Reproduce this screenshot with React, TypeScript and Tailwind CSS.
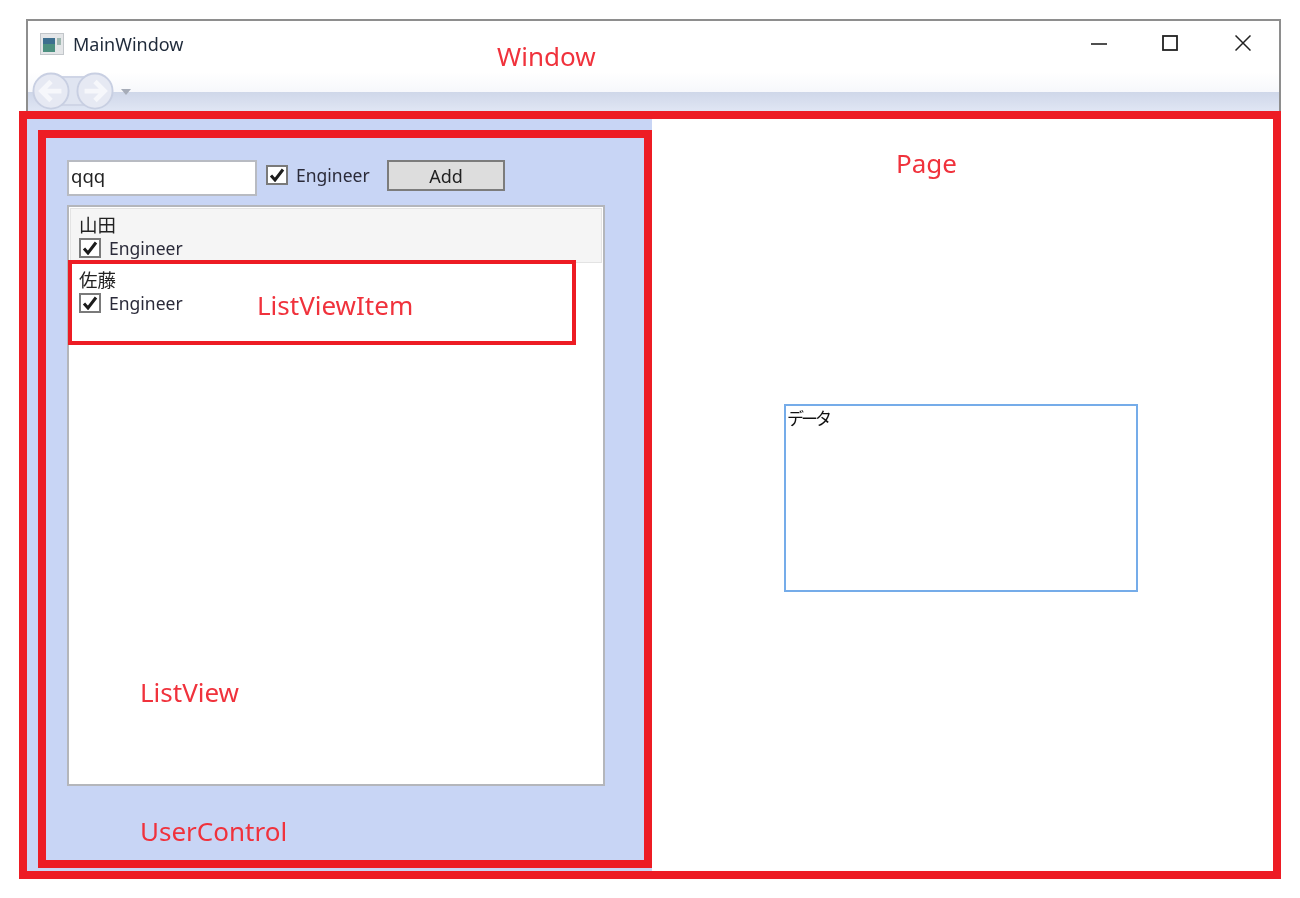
const font = "[font-family:'Noto_Sans','Noto_Sans_CJK_JP',sans-serif]";

function Check() {
  return (
    <span className="flex w-[22px] h-[20px] shrink-0 items-center justify-center border-2 border-[#7a7a7a] bg-white">
      <svg width="16" height="14" viewBox="0 0 16 14">
        <path d="M2 7.5 L6 12 L14 1.5" fill="none" stroke="#1c1c1c" strokeWidth="3" />
      </svg>
    </span>
  );
}

function Item({ name, first }: { name: string; first?: boolean }) {
  return (
    <div className={`h-[55px] pl-[8px] border ${first ? "bg-[#f5f5f5] border-[#e3e3e3]" : "bg-white border-transparent"}`}>
      <div className="h-[20px] mt-[6px] text-[18.5px] leading-[20px] text-[#222]">{name}</div>
      <div className="flex items-center gap-[8px] mt-[3px]">
        <Check />
        <span className="text-[17.5px] leading-[20px] text-[#2b2b3a]">Engineer</span>
      </div>
    </div>
  );
}

function Nav({ dir }: { dir: "l" | "r" }) {
  return (
    <svg width="38" height="38" viewBox="0 0 40 40" className="relative shrink-0">
      <circle cx="20" cy="20" r="18.5" fill="#e6e9f3" stroke="#c8cfe2" strokeWidth="2" />
      <path
        d={dir === "l" ? "M31 20 H12 M20 10 L10 20 L20 30" : "M9 20 H28 M20 10 L30 20 L20 30"}
        fill="none"
        stroke="#f6f7fb"
        strokeWidth="5"
      />
    </svg>
  );
}

export default function App() {
  return (
    <div className={`relative w-[1300px] h-[898px] overflow-hidden bg-white pt-[19px] blur-[0.4px] ${font}`}>
      {/* window chrome */}
      <div className="ml-[26px] w-[1255px] h-[92px] border-t-2 border-x-2 border-[#8e8e8e] flex flex-col">
        <div className="h-[30px] mt-[8px] flex items-center pl-[12px] shrink-0">
          <svg width="24" height="22" viewBox="0 0 24 22">
            <rect x="0.5" y="0.5" width="23" height="21" fill="#e4e6e8" stroke="#c2c6ca" />
            <rect x="3" y="5" width="12" height="14" fill="#4d9080" />
            <rect x="3" y="5" width="12" height="6" fill="#3d6f8f" />
            <rect x="17" y="5" width="4" height="7" fill="#9fb8b0" />
          </svg>
          <span className="ml-[9px] text-[18px] leading-[20px] text-[#1f2a3a]">MainWindow</span>
          <div className="ml-auto flex items-center mr-[28px] -mt-[2px]">
            <svg width="16" height="16" viewBox="0 0 16 16"><path d="M0 9 H16" stroke="#222" strokeWidth="1.6" /></svg>
            <svg className="ml-[55px]" width="16" height="16" viewBox="0 0 16 16"><rect x="1" y="1" width="14" height="14" fill="none" stroke="#222" strokeWidth="1.8" /></svg>
            <svg className="ml-[57px]" width="16" height="16" viewBox="0 0 16 16"><path d="M0.5 0.5 L15.5 15.5 M15.5 0.5 L0.5 15.5" stroke="#222" strokeWidth="1.5" /></svg>
          </div>
        </div>
        <div className="relative flex-1 bg-[linear-gradient(to_bottom,#ffffff_0%,#ffffff_25%,#eff1f8_100%)]">
          <div className="absolute inset-x-0 top-[33px] bottom-0 bg-[linear-gradient(to_bottom,#cfd7e9,#e0e6f4)]" />
          <div className="absolute left-[4px] top-[13px] flex items-center gap-[6px]">
            <div className="absolute left-[20px] top-[4px] w-[50px] h-[30px] bg-[#e0e5f1] border-y-2 border-[#cfd5e6]" />
            <Nav dir="l" />
            <Nav dir="r" />
            <svg width="12" height="8" viewBox="0 0 12 8" className="mt-[2px]"><path d="M1 1 H11 L6 7 Z" fill="#a6acb8" /></svg>
          </div>
        </div>
      </div>

      {/* page frame */}
      <div className="ml-[19px] w-[1262px] h-[768px] border-8 border-[#ed1c24] flex">
        <div className="w-[625px] bg-[#c8d5f5] pt-[11px] pl-[11px]">
          <div className="w-[614px] h-[738px] border-8 border-[#ed1c24] pl-[21px] pt-[22px]">
            <div className="flex items-start">
              <div className="w-[190px] h-[36px] bg-white border-2 border-[#b8bbc2] pl-[2px] text-[18.5px] leading-[28px] text-[#222]">qqq</div>
              <div className="flex items-center gap-[8px] ml-[9px] mt-[5px]">
                <Check />
                <span className="w-[73px] whitespace-nowrap text-[17.5px] leading-[20px] text-[#2b2b3a]">Engineer</span>
              </div>
              <div className="ml-[18px] w-[118px] h-[31px] bg-[#dddddd] border-2 border-[#7c7c7c] text-center text-[18px] leading-[28px] text-[#222]">Add</div>
            </div>
            <div className="mt-[9px] w-[538px] h-[581px] bg-white border-2 border-[#b4b6bb] p-[1px]">
              <Item name="山田" first />
              <Item name="佐藤" />
            </div>
          </div>
        </div>
        <div className="flex-1 bg-white" />
      </div>

      {/* Page's text box */}
      <div className="absolute left-[784px] top-[404px] w-[354px] h-[188px] border-2 border-[#75ace9] bg-white pl-[1px] text-[17px] tracking-[-3px] leading-[26px] text-[#111]">データ</div>

      {/* annotations */}
      <div className="absolute left-[68px] top-[260px] w-[508px] h-[85px] border-[4px] border-[#ed1c24]" />
      <span className="absolute left-[497px] top-[38px] text-[26px] leading-[36px] text-[#f0323c]">Window</span>
      <span className="absolute left-[896px] top-[145px] text-[26px] leading-[36px] text-[#f0323c]">Page</span>
      <span className="absolute left-[257px] top-[287px] text-[26px] leading-[36px] text-[#f0323c]">ListViewItem</span>
      <span className="absolute left-[140px] top-[674px] text-[26px] leading-[36px] text-[#f0323c]">ListView</span>
      <span className="absolute left-[140px] top-[813px] text-[26px] leading-[36px] text-[#f0323c]">UserControl</span>
    </div>
  );
}
